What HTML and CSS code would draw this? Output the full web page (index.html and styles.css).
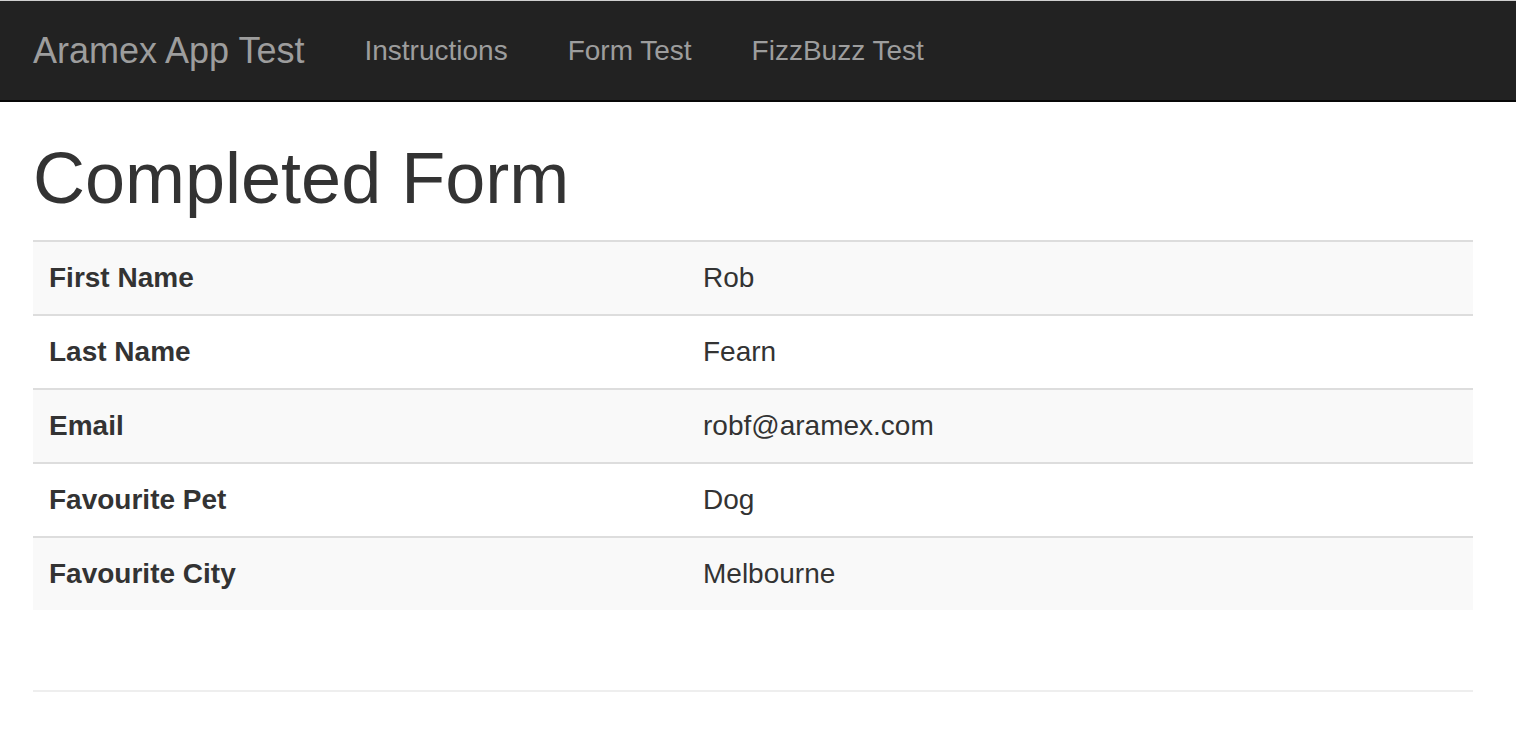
FILE: index.html
```html
<!DOCTYPE html>
<html>
<head>
<meta charset="utf-8">
<title>Completed Form - Aramex App Test</title>
<link rel="stylesheet" href="styles.css">
</head>
<body>
<nav class="navbar">
  <div class="nav-inner">
    <a class="brand" href="#">Aramex App Test</a>
    <ul class="nav-links">
      <li><a href="#">Instructions</a></li>
      <li><a href="#">Form Test</a></li>
      <li><a href="#">FizzBuzz Test</a></li>
    </ul>
  </div>
</nav>
<div class="container">
  <h1 class="title">Completed Form</h1>
  <table class="table">
    <colgroup><col class="col-label"><col></colgroup>
    <tbody>
      <tr><th>First Name</th><td>Rob</td></tr>
      <tr><th>Last Name</th><td>Fearn</td></tr>
      <tr><th>Email</th><td>robf@aramex.com</td></tr>
      <tr><th>Favourite Pet</th><td>Dog</td></tr>
      <tr><th>Favourite City</th><td>Melbourne</td></tr>
    </tbody>
  </table>
  <hr class="rule">
</div>
</body>
</html>
```
FILE: styles.css
```css
html, body {
  margin: 0;
  padding: 0;
  background: #fff;
}
body {
  font-family: "Liberation Sans", Arial, Helvetica, sans-serif;
  font-size: 28px;
  line-height: 40px;
  color: #333;
}
.navbar {
  background: #222;
  border-top: 1px solid #d0d0d0;
  border-bottom: 2px solid #080808;
}
.nav-inner {
  display: flex;
  align-items: flex-start;
  height: 99px;
  padding-left: 3px;
}
.brand {
  font-size: 36px;
  line-height: 40px;
  padding: 30px 30px 29px;
  color: #9d9d9d;
  text-decoration: none;
}
.nav-links {
  display: flex;
  list-style: none;
  margin: 0;
  padding: 0;
}
.nav-links a {
  display: block;
  padding: 30px 30px 29px;
  font-size: 28px;
  line-height: 40px;
  color: #9d9d9d;
  text-decoration: none;
}
.container {
  padding: 0 43px 0 33px;
}
.title {
  font-size: 72px;
  font-weight: 500;
  line-height: 1.1;
  margin: 37px 0 22px;
  color: #333;
}
.table {
  width: 100%;
  border-collapse: collapse;
  border-spacing: 0;
  table-layout: fixed;
  margin-bottom: 40px;
}
.col-label {
  width: 654px;
}
.table th,
.table td {
  text-align: left;
  padding: 16px;
  line-height: 40px;
  border-top: 2px solid #ddd;
  vertical-align: top;
}
.table th {
  font-weight: bold;
}
.table tr:nth-child(odd) {
  background: #f9f9f9;
}
.rule {
  margin: 80px 0 0;
  border: 0;
  border-top: 2px solid #eee;
}
```
